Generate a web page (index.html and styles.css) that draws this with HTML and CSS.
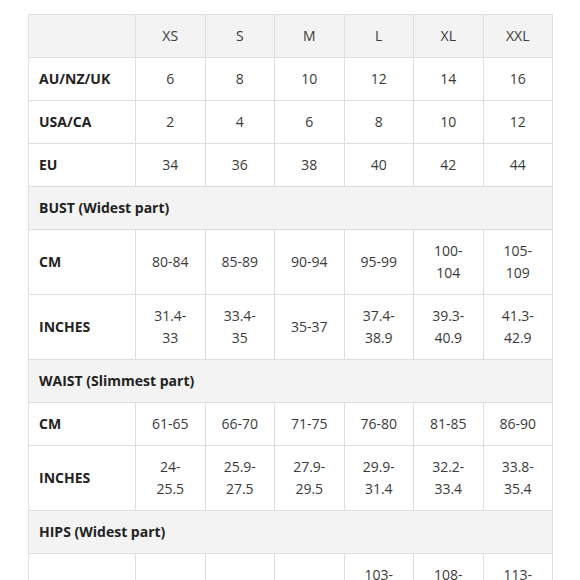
FILE: index.html
```html
<!DOCTYPE html>
<html>
<head>
<meta charset="utf-8">
<link rel="stylesheet" href="styles.css">
</head>
<body>
<div class="page">
<table class="sizes">
  <colgroup>
    <col class="c-label">
    <col class="c-size"><col class="c-size"><col class="c-size">
    <col class="c-size"><col class="c-size"><col class="c-size">
  </colgroup>
  <thead>
    <tr class="head">
      <th></th><th>XS</th><th>S</th><th>M</th><th>L</th><th>XL</th><th>XXL</th>
    </tr>
  </thead>
  <tbody>
    <tr><td class="lbl">AU/NZ/UK</td><td>6</td><td>8</td><td>10</td><td>12</td><td>14</td><td>16</td></tr>
    <tr><td class="lbl">USA/CA</td><td>2</td><td>4</td><td>6</td><td>8</td><td>10</td><td>12</td></tr>
    <tr><td class="lbl">EU</td><td>34</td><td>36</td><td>38</td><td>40</td><td>42</td><td>44</td></tr>
    <tr class="section"><td colspan="7">BUST (Widest part)</td></tr>
    <tr><td class="lbl">CM</td><td>80-84</td><td>85-89</td><td>90-94</td><td>95-99</td><td>100-104</td><td>105-109</td></tr>
    <tr><td class="lbl">INCHES</td><td>31.4-33</td><td>33.4-35</td><td>35-37</td><td>37.4-38.9</td><td>39.3-40.9</td><td>41.3-42.9</td></tr>
    <tr class="section"><td colspan="7">WAIST (Slimmest part)</td></tr>
    <tr><td class="lbl">CM</td><td>61-65</td><td>66-70</td><td>71-75</td><td>76-80</td><td>81-85</td><td>86-90</td></tr>
    <tr><td class="lbl">INCHES</td><td>24-25.5</td><td>25.9-27.5</td><td>27.9-29.5</td><td>29.9-31.4</td><td>32.2-33.4</td><td>33.8-35.4</td></tr>
    <tr class="section"><td colspan="7">HIPS (Widest part)</td></tr>
    <tr><td class="lbl">CM</td><td>88-92</td><td>93-97</td><td class="nw">98-102</td><td>103-107</td><td>108-112</td><td>113-117</td></tr>
    <tr><td class="lbl">INCHES</td><td>34.6-36.2</td><td>36.6-38.2</td><td>38.6-40.2</td><td>40.6-42.1</td><td>42.5-44.1</td><td>44.5-46</td></tr>
  </tbody>
</table>
</div>
</body>
</html>
```

FILE: styles.css
```css
html, body {
  margin: 0;
  padding: 0;
  background: #ffffff;
}

.page {
  padding: 14px 0 0 28px;
  font-family: "Open Sans", "Liberation Sans", sans-serif;
  font-size: 14px;
  color: #3a3a3a;
}

.sizes {
  width: 525px;
  table-layout: fixed;
  border-collapse: collapse;
}

.c-label { width: 107px; }

.sizes th,
.sizes td {
  border: 1px solid #dedede;
  padding: 10px 12px;
  line-height: 22px;
  text-align: center;
  vertical-align: middle;
  font-weight: 400;
}

.sizes td.nw {
  white-space: nowrap;
  padding-left: 4px;
  padding-right: 4px;
}

.head th {
  background: #f3f3f3;
}

.sizes td.lbl {
  text-align: left;
  font-weight: 700;
  color: #222222;
  padding-left: 10px;
}

.section td {
  background: #f3f3f3;
  text-align: left;
  font-weight: 700;
  color: #222222;
  padding-left: 10px;
}
```
